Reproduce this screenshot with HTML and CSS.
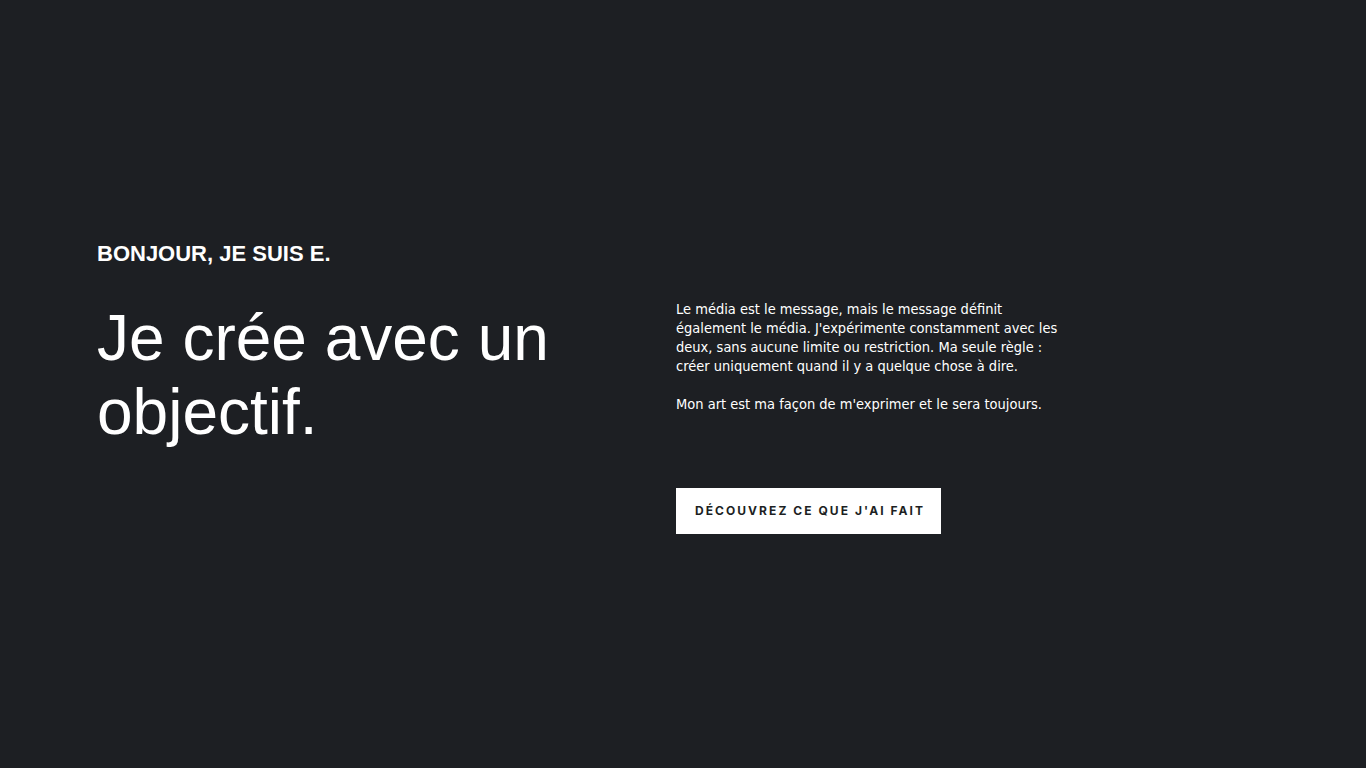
FILE: index.html
```html
<!DOCTYPE html>
<html lang="fr">
<head>
<meta charset="utf-8">
<title>Bonjour, je suis E.</title>
<link rel="stylesheet" href="styles.css">
</head>
<body>
<main class="hero">
  <div class="hero-left">
    <p class="eyebrow">BONJOUR, JE SUIS E.</p>
    <h1 class="title">Je crée avec un objectif.</h1>
  </div>
  <div class="hero-right">
    <p class="lead">Le média est le message, mais le message définit également le média. J'expérimente constamment avec les deux, sans aucune limite ou restriction. Ma seule règle : créer uniquement quand il y a quelque chose à dire.</p>
    <p class="lead">Mon art est ma façon de m'exprimer et le sera toujours.</p>
    <a class="cta" href="#">DÉCOUVREZ CE QUE J'AI FAIT</a>
  </div>
</main>
</body>
</html>
```

FILE: styles.css
```css
html, body {
  margin: 0;
  padding: 0;
  height: 100%;
}
body {
  background: #1d1f23;
  color: #ffffff;
  font-family: "Liberation Sans", Arial, sans-serif;
}
.hero {
  box-sizing: border-box;
  height: 768px;
  padding: 240px 97px 0 97px;
  display: grid;
  grid-template-columns: 579px 1fr;
}
.eyebrow {
  margin: 0;
  font-size: 22px;
  line-height: 28px;
  font-weight: 700;
}
.title {
  margin: 33px 0 0 0;
  font-size: 64px;
  line-height: 74px;
  font-weight: 400;
  width: 480px;
}
.hero-right {
  padding-top: 60px;
  display: flex;
  flex-direction: column;
  align-items: flex-start;
}
.lead {
  margin: 0 0 19px 0;
  width: 390px;
  font-family: "DejaVu Sans Condensed", "DejaVu Sans", sans-serif;
  font-stretch: condensed;
  font-size: 14.5px;
  line-height: 19px;
}
.cta {
  margin-top: 55px;
  display: inline-block;
  background: #ffffff;
  color: #1d1f23;
  text-decoration: none;
  font-family: "Inter", "Roboto", sans-serif;
  font-weight: 700;
  font-size: 12px;
  letter-spacing: 2.05px;
  line-height: 46px;
  height: 46px;
  padding: 0 16px 0 19px;
}
```
